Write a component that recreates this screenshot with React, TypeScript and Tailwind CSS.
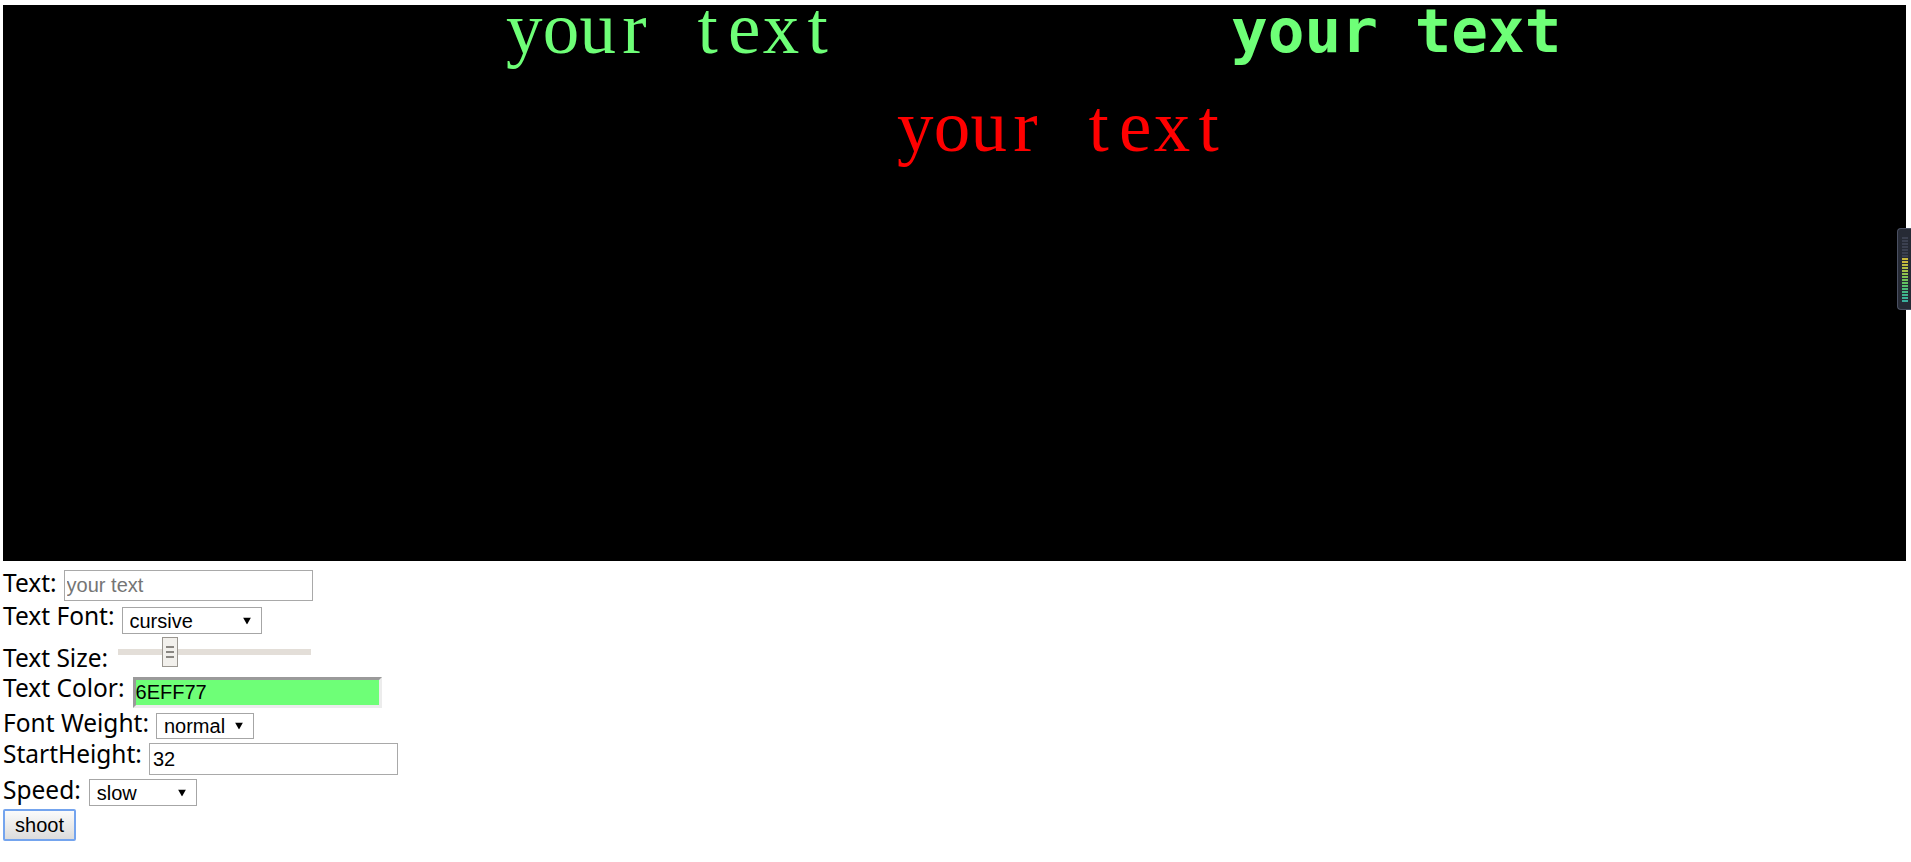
import React from 'react';

const label = "font-['Noto_Sans',sans-serif] text-[24.5px] leading-none text-black whitespace-nowrap";
const field = "font-['Liberation_Sans',Arial,sans-serif] text-[20px] leading-none text-black";

// serif text drawn on the canvas, one fixed cell per letter
const CellText = ({ text, className }: { text: string; className: string }) => (
  <div className={className}>
    {text.split('').map((ch, i) => (
      <span key={i} className="inline-block w-[36.67px] text-center">
        {ch === ' ' ? '\u00a0' : ch}
      </span>
    ))}
  </div>
);

const Arrow = () => (
  <svg
    width="8"
    height="7"
    viewBox="0 0 8 7"
    className="pointer-events-none absolute right-[11px] top-1/2 -translate-y-1/2"
  >
    <path d="M0 0H8L4 7Z" fill="#000" />
  </svg>
);

const Select = ({ value, options, className }: { value: string; options: string[]; className: string }) => (
  <div className={`relative ${className}`}>
    <select
      defaultValue={value}
      className={`h-full w-full appearance-none rounded-none border border-[#a6a6a6] bg-white pl-[7px] outline-none ${field}`}
    >
      {options.map((o) => (
        <option key={o}>{o}</option>
      ))}
    </select>
    <Arrow />
  </div>
);

const Meter = () => {
  const bars = [
    '#3b4050', '#3b4050', '#3b4050', '#3b4050', '#3b4050', '#3b4050', '#3b4050',
    '#c8b83c', '#c8b83c', '#bcbc40', '#b0bf44', '#a4c246',
    '#8fc34c', '#7fc452', '#70c258', '#62c060', '#56be6a',
    '#4cbb78', '#44b884', '#3fb48e', '#3cb196', '#3aae9c',
  ];
  return (
    <div className="fixed right-0 top-[228px] flex h-[82px] w-[14px] flex-col gap-[1px] rounded-l-[4px] border border-r-0 border-[#4a5062] bg-[#262a35] pl-[4px] pt-[8px]">
      {bars.map((c, i) => (
        <div key={i} className="h-[2px] w-[6px]" style={{ backgroundColor: c }} />
      ))}
    </div>
  );
};

export default function App() {
  return (
    <div className="bg-white">
      {/* canvas */}
      <div className="relative ml-[3px] mt-[5px] h-[556px] w-[1903px] overflow-hidden bg-black">
        <CellText
          text="your text"
          className="absolute left-[503px] top-[-13px] whitespace-nowrap font-['Liberation_Serif',serif] text-[73px] leading-none text-[#6EFF77]"
        />
        <div className="absolute left-[1228px] top-[-5px] whitespace-pre font-['DejaVu_Sans_Mono',monospace] text-[61px] font-bold leading-none text-[#6EFF77]">
          your text
        </div>
        <CellText
          text="your text"
          className="absolute left-[894px] top-[85px] whitespace-nowrap font-['Liberation_Serif',serif] text-[73px] leading-none text-[#ff0000]"
        />
      </div>

      {/* controls */}
      <div className="ml-[3px] mt-[10px]">
        <div className="flex h-[33px] items-start gap-[7px]">
          <span className={label}>Text:</span>
          <input
            placeholder="your text"
            className={`-mt-[1px] h-[31px] w-[249px] border border-[#a9a9a9] px-[2px] outline-none placeholder:text-[#757575] ${field}`}
          />
        </div>

        <div className="flex h-[42px] items-start gap-[7px]">
          <span className={label}>Text Font:</span>
          <Select value="cursive" options={['cursive', 'serif', 'monospace']} className="mt-[3px] h-[27px] w-[140px]" />
        </div>

        <div className="flex h-[30px] items-start gap-[7px]">
          <span className={label}>Text Size:</span>
          <div className="relative -mt-[9px] ml-[3px] h-[30px] w-[193px]">
            <div className="absolute left-0 right-0 top-[12px] h-[6px] bg-[#e3ded8]" />
            <div className="absolute left-[44px] top-0 flex h-[30px] w-[16px] flex-col items-center justify-center gap-[3px] border border-[#9a9690] bg-[#f2f0ec]">
              <div className="h-[2px] w-[8px] bg-[#8a8782]" />
              <div className="h-[2px] w-[8px] bg-[#8a8782]" />
              <div className="h-[2px] w-[8px] bg-[#8a8782]" />
            </div>
          </div>
        </div>

        <div className="flex h-[35px] items-start gap-[8px]">
          <span className={label}>Text Color:</span>
          <input
            defaultValue="6EFF77"
            className={`mt-[1px] h-[31px] w-[249px] border-[3px] border-b-[#ececec] border-l-[#9a9a9a] border-r-[#ececec] border-t-[#9a9a9a] bg-[#6EFF77] px-0 outline-none ${field}`}
          />
        </div>

        <div className="flex h-[31px] items-start gap-[7px]">
          <span className={label}>Font Weight:</span>
          <Select value="normal" options={['normal', 'bold']} className="mt-[2px] h-[26px] w-[98px]" />
        </div>

        <div className="flex h-[36px] items-start gap-[7px]">
          <span className={label}>StartHeight:</span>
          <input
            defaultValue="32"
            className={`mt-[1px] h-[32px] w-[249px] border border-[#a9a9a9] px-[3px] outline-none ${field}`}
          />
        </div>

        <div className="flex h-[31px] items-start gap-[8px]">
          <span className={label}>Speed:</span>
          <Select value="slow" options={['slow', 'normal', 'fast']} className="mt-[1px] h-[27px] w-[108px]" />
        </div>

        <button className={`h-[32px] w-[73px] rounded-[2px] border-2 border-[#74a4ee] bg-linear-to-b from-[#fbfbfb] to-[#dcdcdc] ${field}`}>
          shoot
        </button>
      </div>

      <Meter />
    </div>
  );
}
